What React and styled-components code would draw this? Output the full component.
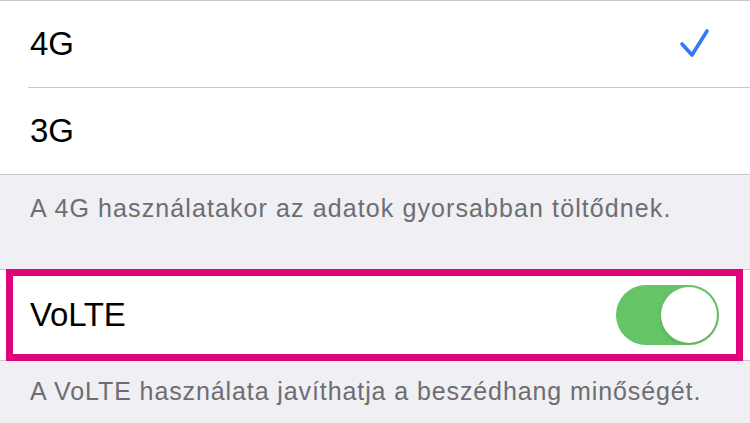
import styled, { createGlobalStyle } from 'styled-components'

const GlobalStyle = createGlobalStyle`
  html, body {
    margin: 0;
    padding: 0;
    background: #efeff4;
  }
  body {
    font-family: "Liberation Sans", Arial, sans-serif;
    -webkit-font-smoothing: antialiased;
  }
`

const Page = styled.div`
  width: 750px;
  height: 423px;
  overflow: hidden;
  background: #efeff4;
`

const Group = styled.div`
  background: #ffffff;
  border-top: 1px solid #c8c7cc;
  border-bottom: 1px solid #c8c7cc;
`

const Row = styled.div`
  position: relative;
  display: flex;
  align-items: center;
  justify-content: space-between;
  height: ${p => p.$height || 86}px;
  padding: 0 32px 0 30px;
  margin-left: ${p => (p.$inset ? 28 : 0)}px;
  padding-left: ${p => (p.$inset ? 2 : 30)}px;
  border-bottom: ${p => (p.$divider ? '1px solid #c8c7cc' : 'none')};
`

const Label = styled.span`
  font-size: 33px;
  color: #000000;
  letter-spacing: -0.2px;
`

const Footer = styled.div`
  height: ${p => p.$height}px;
  box-sizing: border-box;
  padding: ${p => p.$top}px 30px 0;
  font-size: 25px;
  line-height: 30px;
  color: #6d6d72;
  letter-spacing: ${p => p.$spacing || 0}px;
  white-space: nowrap;
`

const Check = styled.svg`
  width: 32px;
  height: 32px;
  margin-right: 7px;
`

const Toggle = styled.div`
  position: relative;
  width: 103px;
  height: 60px;
  border-radius: 30px;
  background: #65c466;
  margin-right: -1px;
`

const Knob = styled.div`
  position: absolute;
  top: 2px;
  right: 2px;
  width: 56px;
  height: 56px;
  border-radius: 50%;
  background: #ffffff;
  box-shadow: 0 2px 4px rgba(0, 0, 0, 0.12);
`

const Highlight = styled.div`
  position: absolute;
  top: -1px;
  left: 6px;
  right: 7px;
  bottom: -1px;
  border: 7px solid #e0047a;
  pointer-events: none;
`

const App = () => (
    <Page>
        <GlobalStyle />
        <Group>
            <Row $inset $divider $height={86}>
                <Label>4G</Label>
                <Check viewBox="0 0 32 32">
                    <path
                        d="M3 16 L13 27 L28 3"
                        fill="none"
                        stroke="#3478f6"
                        strokeWidth="3.6"
                        strokeLinecap="round"
                        strokeLinejoin="round"
                    />
                </Check>
            </Row>
            <Row $height={86}>
                <Label>3G</Label>
            </Row>
        </Group>
        <Footer $height={94} $top={18} $spacing={1.1}>
            A 4G használatakor az adatok gyorsabban töltődnek.
        </Footer>
        <Group>
            <Row $height={90}>
                <Label>VoLTE</Label>
                <Toggle>
                    <Knob />
                </Toggle>
                <Highlight />
            </Row>
        </Group>
        <Footer $height={62} $top={15} $spacing={0.9}>
            A VoLTE használata javíthatja a beszédhang minőségét.
        </Footer>
    </Page>
)

export default App
